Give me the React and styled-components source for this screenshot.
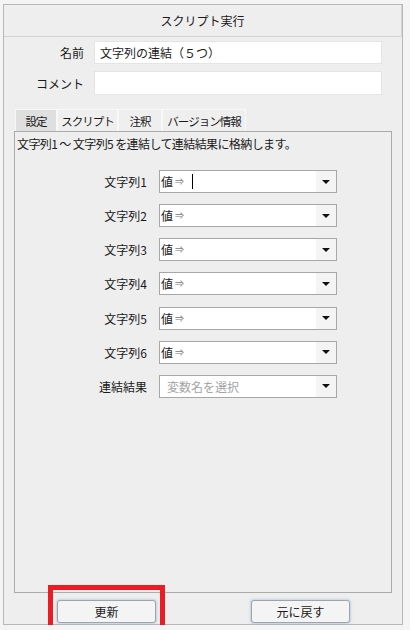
import React from "react";
import styled, { createGlobalStyle } from "styled-components";

const GlobalStyle = createGlobalStyle`
  body {
    margin: 0;
    background: #f4f4f4;
    font-family: "Noto Sans CJK JP", "Noto Sans", sans-serif;
    color: #1a1a1a;
  }
`;

const Frame = styled.div`
  box-sizing: border-box;
  margin: 4px 0 0 3px;
  width: 400px;
  height: 621px;
  border: 1px solid #b7b7b7;
  background: #eeeeee;
  display: flex;
  flex-direction: column;
`;

const TitleBar = styled.div`
  box-sizing: border-box;
  height: 32px;
  flex: none;
  border-bottom: 1px solid #d4d4d4;
  border-right: 1px solid #d4d4d4;
  display: flex;
  align-items: center;
  justify-content: center;
  font-size: 12px;
`;

const Fields = styled.div`
  display: grid;
  grid-template-columns: 80px 288px;
  column-gap: 10px;
  row-gap: 7px;
  padding-top: 4px;
  align-items: center;
`;

const Label = styled.label`
  text-align: right;
  font-size: 12px;
  white-space: nowrap;
`;

const TextBox = styled.div`
  box-sizing: border-box;
  height: ${({ $h }) => $h}px;
  background: #fff;
  border: 1px solid #e4e4e4;
  padding-left: 5px;
  font-size: 12px;
  display: flex;
  align-items: center;
`;

const Tabs = styled.div`
  display: flex;
  margin: 14px 0 0 11px;
  height: 22px;
  flex: none;
`;

const Tab = styled.div`
  box-sizing: border-box;
  width: ${({ $w }) => $w}px;
  height: 22px;
  display: flex;
  align-items: center;
  justify-content: center;
  white-space: nowrap;
  font-size: 11.5px;
  letter-spacing: -1px;
  background: ${({ $active }) => ($active ? "#dfdfdf" : "#efefef")};
  border: 1px solid #f8f8f8;
  border-bottom: none;
`;

const Panel = styled.div`
  box-sizing: border-box;
  flex: 1;
  margin: 0 10px 0 10px;
  border: 1px solid #ababab;
  padding: 3px 0 0 2px;
`;

const Description = styled.p`
  margin: 0;
  font-size: 12px;
  letter-spacing: -0.6px;
  white-space: nowrap;
`;

const Form = styled.div`
  display: grid;
  grid-template-columns: 130px 178px;
  column-gap: 12px;
  row-gap: 11.17px;
  margin-top: 18px;
  align-items: center;
`;

const Select = styled.div`
  box-sizing: border-box;
  height: 23px;
  background: #fff;
  border: 1px solid #a7a7a7;
  display: flex;
  align-items: stretch;
`;

const SelectValue = styled.div`
  flex: 1;
  display: flex;
  align-items: center;
  padding-left: ${({ $placeholder }) => ($placeholder ? 7 : 1)}px;
  font-size: 12px;
  color: ${({ $placeholder }) => ($placeholder ? "#a4a4a4" : "#1a1a1a")};
`;

const Arrow = styled.span`
  font-size: 9px;
  color: #777;
  margin-left: 2px;
`;

const Caret = styled.span`
  display: inline-block;
  width: 1px;
  height: 15px;
  background: #000;
  margin-left: 8px;
`;

const DropButton = styled.div`
  width: 20px;
  background: #f4f4f4;
  display: flex;
  align-items: center;
  justify-content: center;

  &::after {
    content: "";
    border-left: 4px solid transparent;
    border-right: 4px solid transparent;
    border-top: 4px solid #111;
  }
`;

const Footer = styled.div`
  flex: none;
  height: 31px;
  display: flex;
  justify-content: space-between;
  align-items: flex-start;
  padding: 5px 52px 0 53px;
  box-sizing: border-box;
`;

const ButtonWrap = styled.div`
  position: relative;
`;

const Button = styled.button`
  box-sizing: border-box;
  width: 99px;
  height: 23px;
  border: 1px solid #a3a3a3;
  border-radius: 3px;
  background: #f4f4f4;
  box-shadow: 0 0 2px 1px rgba(150, 190, 235, 0.55);
  font-family: inherit;
  font-size: 12px;
  color: #1a1a1a;
  padding: 0;
`;

const Highlight = styled.span`
  position: absolute;
  top: -13px;
  left: -9px;
  right: -9px;
  bottom: -8px;
  border: 5px solid #ec1c24;
  pointer-events: none;
`;

const rows = ["文字列1", "文字列2", "文字列3", "文字列4", "文字列5", "文字列6"];

const tabs = [
  { label: "設定", w: 42 },
  { label: "スクリプト", w: 61 },
  { label: "注釈", w: 44 },
  { label: "バージョン情報", w: 84 },
];

export default function App() {
  return (
    <>
      <GlobalStyle />
      <Frame>
        <TitleBar>スクリプト実行</TitleBar>
        <Fields>
          <Label>名前</Label>
          <TextBox $h={23}>文字列の連結（５つ）</TextBox>
          <Label>コメント</Label>
          <TextBox $h={24} />
        </Fields>
        <Tabs>
          {tabs.map((t, i) => (
            <Tab key={t.label} $w={t.w} $active={i === 0}>
              {t.label}
            </Tab>
          ))}
        </Tabs>
        <Panel>
          <Description>文字列1 〜 文字列5 を連結して連結結果に格納します。</Description>
          <Form>
            {rows.map((name, i) => (
              <React.Fragment key={name}>
                <Label>{name}</Label>
                <Select>
                  <SelectValue>
                    値<Arrow>⇒</Arrow>
                    {i === 0 && <Caret />}
                  </SelectValue>
                  <DropButton />
                </Select>
              </React.Fragment>
            ))}
            <Label>連結結果</Label>
            <Select>
              <SelectValue $placeholder>変数名を選択</SelectValue>
              <DropButton />
            </Select>
          </Form>
        </Panel>
        <Footer>
          <ButtonWrap>
            <Button>更新</Button>
            <Highlight />
          </ButtonWrap>
          <ButtonWrap>
            <Button>元に戻す</Button>
          </ButtonWrap>
        </Footer>
      </Frame>
    </>
  );
}
